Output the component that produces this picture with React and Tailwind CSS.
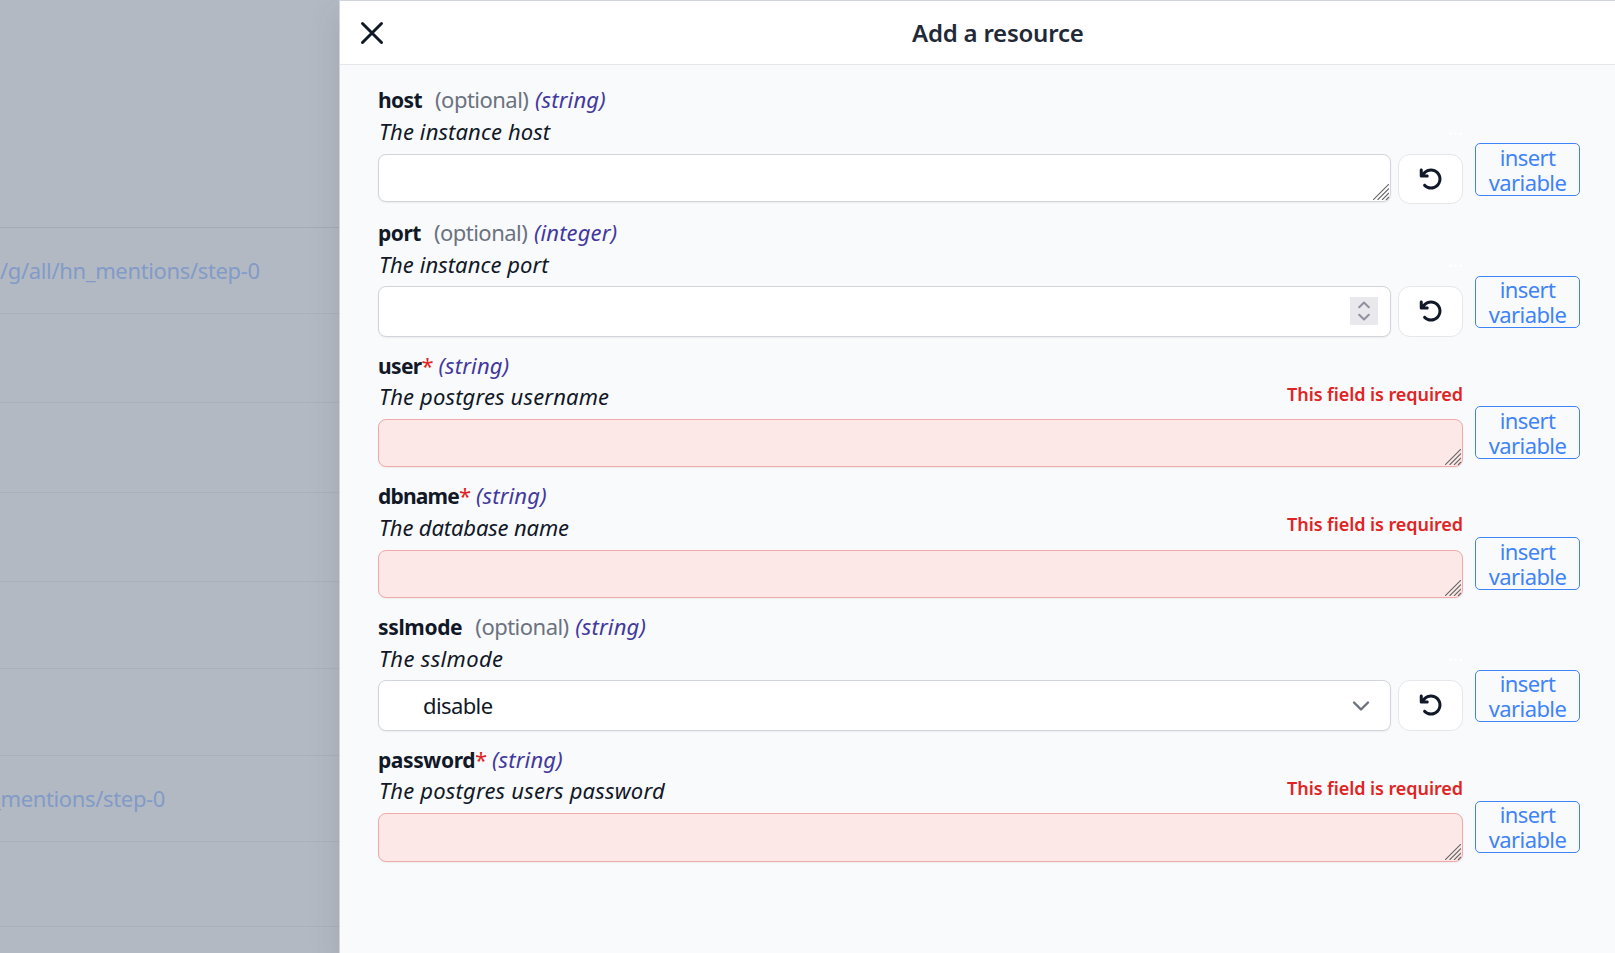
import { FaArrowRotateLeft } from "react-icons/fa6";

const fields = [
  { name: "host", type: "string", description: "The instance host", control: "text", row: "h-[132px]", label: "pt-0", descGap: "mt-0", control_h: "h-12", button: "mt-[59px] h-[53px]", nameTrack: "tracking-[-0.6px]", descTrack: "tracking-[0.1px]" },
  { name: "port", type: "integer", description: "The instance port", control: "number", row: "h-[133px]", label: "pt-px", descGap: "mt-0", control_h: "h-[51px]", button: "mt-[60px] h-[52px]", nameTrack: "tracking-[-0.5px]", descTrack: "tracking-[0.05px]" },
  { name: "user", type: "string", required: true, description: "The postgres username", control: "text", row: "h-[131px]", label: "pt-px", descGap: "-mt-px", control_h: "h-12", button: "mt-[57px] h-[53px]", nameTrack: "tracking-[-0.65px]", descTrack: "tracking-[0.15px]", error: "mt-[33px]" },
  { name: "dbname", type: "string", required: true, description: "The database name", control: "text", row: "h-[130px]", label: "pt-0", descGap: "mt-0", control_h: "h-12", button: "mt-[57px] h-[53px]", nameTrack: "tracking-[-0.8px]", descTrack: "tracking-[-0.15px]", error: "mt-[32px]" },
  { name: "sslmode", type: "string", description: "The sslmode", control: "select", row: "h-[133px]", label: "pt-px", descGap: "mt-0", control_h: "h-[51px]", button: "mt-[60px] h-[52px]", nameTrack: "tracking-[-0.35px]", descTrack: "tracking-[0.35px]" },
  { name: "password", type: "string", required: true, description: "The postgres users password", control: "text", row: "h-[131px]", label: "pt-px", descGap: "-mt-px", control_h: "h-[49px]", button: "mt-[58px] h-[52px]", nameTrack: "tracking-[-0.4px]", descTrack: "tracking-[0.2px]", error: "mt-[33px]" },
];

function ResizeGrip() {
  return (
    <svg className="absolute right-px bottom-px" width="16" height="16" viewBox="0 0 16 16" fill="none" stroke="#666666" strokeWidth="1.1">
      <path d="M0 16 16 0M4.5 16 16 4.5M9 16 16 9M13 16 16 13" />
    </svg>
  );
}

function Control({ field }) {
  const color = field.required ? "border-[#f1a9a9] bg-[#fce8e7]" : "border-[#d1d5db] bg-white";
  return (
    <div className={`relative flex min-w-0 flex-1 items-center rounded-[8px] border shadow-[0_1px_2px_rgba(0,0,0,0.06)] ${field.control_h} ${color}`}>
      {field.control === "text" && <ResizeGrip />}
      {field.control === "number" && (
        <div className="mr-3 mb-px ml-auto flex h-7 w-7 items-center justify-center bg-[#e9e9ed]">
          <svg width="12" height="20" viewBox="0 0 12 20" fill="none" stroke="#8f8f9d" strokeWidth="2" strokeLinecap="round" strokeLinejoin="round">
            <path d="M1.2 6.3 6 1.5l4.8 4.8M1.2 13.7 6 18.5l4.8-4.8" />
          </svg>
        </div>
      )}
      {field.control === "select" && (
        <>
          <span className="ml-11 text-[22px] tracking-[-0.6px] text-[#111827]">disable</span>
          <svg className="mr-[20px] ml-auto" width="18" height="12" viewBox="0 0 18 12" fill="none" stroke="#6b7280" strokeWidth="2.4" strokeLinecap="round" strokeLinejoin="round">
            <path d="M2 2.5 9 9.5l7-7" />
          </svg>
        </>
      )}
    </div>
  );
}

function Field({ field }) {
  return (
    <div className={`flex ${field.row}`}>
      <div className="w-[1085px]">
        <div className="flex h-[70px] justify-between">
          <div className={`whitespace-nowrap ${field.label}`}>
            <div className="flex h-[31px] items-baseline text-[22px] leading-[30px]">
              <span className={`text-[21px] font-bold text-[#111827] ${field.nameTrack}`}>{field.name}</span>
              {field.required ? (
                <span className="w-[10px] text-[#e02424]">*</span>
              ) : (
                <span className="ml-[13px] w-[93px] tracking-[-0.52px] text-[#6b7280]">(optional)</span>
              )}
              <span className="ml-[7px] tracking-[0.15px] text-[#42389d] italic">({field.type})</span>
            </div>
            <div className={`flex h-8 items-center pl-px text-[22px] text-[#111827] italic ${field.descGap} ${field.descTrack}`}>
              {field.description}
            </div>
          </div>
          {field.required ? (
            <span className={`text-[18px] leading-6 font-semibold tracking-[-0.07px] text-[#e02424] ${field.error}`}>This field is required</span>
          ) : (
            <span className="mt-[32px] text-[18px] leading-6 font-semibold text-white">...</span>
          )}
        </div>
        <div className="flex gap-[7px]">
          <Control field={field} />
          {!field.required && (
            <button className={`flex w-[65px] items-center justify-center rounded-[12px] border border-[#e5e7eb] bg-white pb-px ${field.control === "text" ? "h-[50px]" : "h-[51px]"}`}>
              <FaArrowRotateLeft size={24} color="#111827" />
            </button>
          )}
        </div>
      </div>
      <button className={`ml-3 w-[105px] rounded-[5px] border border-[#3f83f8] text-[22px] leading-[25px] tracking-[-0.6px] text-[#3f83f8] ${field.button}`}>
        insert variable
      </button>
    </div>
  );
}

const backgroundRows = [
  ["h-[228px] border-[#a5abb5]", ""],
  ["h-[86px] border-[#abb1bb]", "/g/all/hn_mentions/step-0"],
  ["h-[89px] border-[#abb1bb]", ""],
  ["h-[90px] border-[#abb1bb]", ""],
  ["h-[89px] border-[#abb1bb]", ""],
  ["h-[87px] border-[#abb1bb]", ""],
  ["h-[87px] border-[#abb1bb]", ""],
  ["h-[86px] border-[#abb1bb]", "_mentions/step-0"],
  ["h-[85px] border-[#abb1bb]", ""],
];

export default function App() {
  return (
    <div className="flex h-[953px] w-[1615px] overflow-hidden bg-[#b3b9c3] font-['Noto_Sans',sans-serif]">
      <div className="w-[339px] shrink-0">
        {backgroundRows.map(([row, text], i) => (
          <div key={i} className={`flex items-center border-b text-[22px] whitespace-nowrap text-[#829bc7] ${row}`}>
            <span className={i === 7 ? "-ml-[9px] tracking-[-0.35px]" : "tracking-[-0.36px]"}>{text}</span>
          </div>
        ))}
      </div>
      <div className="relative flex flex-1 flex-col border-t border-l border-[#d1d5db] bg-[#f9fafc] shadow-[0_12px_28px_rgba(70,60,80,0.16)]">
        <header className="flex h-16 items-center border-b border-[#e5e7eb] bg-white">
          <svg className="ml-5" width="24" height="24" viewBox="0 0 24 24" fill="none" stroke="#111827" strokeWidth="3" strokeLinecap="round">
            <path d="m2.5 2.5 19 19m0-19-19 19" />
          </svg>
          <h1 className="ml-[528px] text-[24px] font-semibold tracking-[-0.22px] text-[#1f2937]">Add a resource</h1>
        </header>
        <main className="pt-[19px] pl-[38px]">
          {fields.map((field) => (
            <Field key={field.name} field={field} />
          ))}
        </main>
      </div>
    </div>
  );
}
